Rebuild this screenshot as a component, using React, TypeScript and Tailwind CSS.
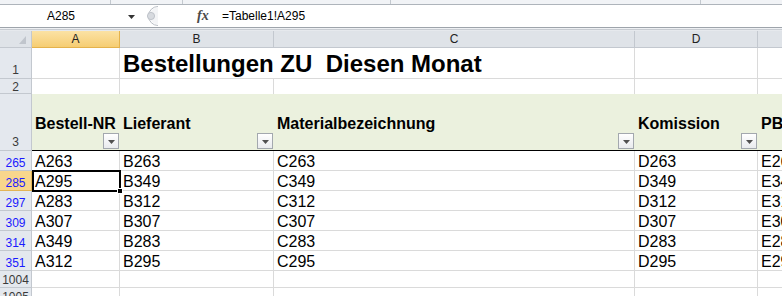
import React from "react";

const cols = "grid grid-cols-[32px_88px_154px_361px_123px_1fr]";

const rows = [
  { n: "265", a: "A263", b: "B263", c: "C263", d: "D263", e: "E263" },
  { n: "285", a: "A295", b: "B349", c: "C349", d: "D349", e: "E349", sel: true },
  { n: "297", a: "A283", b: "B312", c: "C312", d: "D312", e: "E312" },
  { n: "309", a: "A307", b: "B307", c: "C307", d: "D307", e: "E307" },
  { n: "314", a: "A349", b: "B283", c: "C283", d: "D283", e: "E283" },
  { n: "351", a: "A312", b: "B295", c: "C295", d: "D295", e: "E295" },
];

function FilterButton() {
  return (
    <div className="absolute right-[1px] bottom-[1px] w-[16px] h-[16px] border border-[#a3a8ae] bg-gradient-to-b from-white to-[#e9ebee] flex items-center justify-center">
      <svg width="7" height="4" viewBox="0 0 7 4" className="mt-[2px]">
        <path d="M0 0 L7 0 L3.5 4 Z" fill="#505050" />
      </svg>
    </div>
  );
}

function RowHead({ children, sel, blue, h, pb }: { children?: React.ReactNode; sel?: boolean; blue?: boolean; h: string; pb: string }) {
  return (
    <div
      className={`${h} ${pb} flex items-end justify-center border-r border-b text-[12px] leading-[12px] ${
        sel ? "bg-[#f8d68c] border-[#e3b455]" : "bg-[#e4e8ee] border-[#c3c8cf]"
      } ${blue ? "text-[#1a1aff]" : "text-[#3a3a3a]"}`}
    >
      {children}
    </div>
  );
}

export default function App() {
  return (
    <div className="w-[782px] h-[296px] overflow-hidden bg-white font-['Liberation_Sans',Arial,sans-serif] text-black">
      {/* ribbon remnant */}
      <div className="h-[5px] flex bg-[#f1f3f6] border-b border-[#aeb4bb]">
        <div className="w-[111px] border-r border-[#c4c9cf]" />
        <div className="w-[72px] border-r border-[#c4c9cf]" />
        <div className="w-[208px] border-r border-[#c4c9cf]" />
        <div className="w-[310px] border-r border-[#c4c9cf]" />
        <div className="flex-1" />
      </div>

      {/* formula bar */}
      <div className="h-[22px] flex items-center bg-white text-[12px] leading-[12px]">
        <div className="w-[141px] h-full relative flex items-center">
          <span className="ml-[47px]">A285</span>
          <svg width="7" height="4" viewBox="0 0 7 4" className="absolute left-[128px] top-[10px]">
            <path d="M0 0 L7 0 L3.5 4 Z" fill="#333" />
          </svg>
        </div>
        <svg width="18" height="20" viewBox="0 0 18 20" className="shrink-0">
          <path d="M17 0.5 A9.5 9.5 0 0 0 17 19.5" fill="none" stroke="#b8bdc4" />
          <path d="M17 1.5 A8.5 8.5 0 0 0 17 18.5 Z" fill="#f3f4f6" />
          <circle cx="10" cy="10" r="3.6" fill="#d7dadf" stroke="#b5bac1" strokeWidth="0.8" />
        </svg>
        <div className="w-[38px]" />
        <span className="font-['Liberation_Serif',serif] italic font-bold text-[14px] text-[#4a4a4a] w-[12px]">
          fx
        </span>
        <div className="w-[13px]" />
        <span>=Tabelle1!A295</span>
      </div>
      <div className="h-[1px] bg-[#9ea4ab]" />
      <div className="h-[1px] bg-[#eef0f3]" />
      <div className="h-[1px] bg-[#c8ccd2]" />
      <div className="h-[1px] bg-[#e6e9ed]" />

      {/* column headers */}
      <div className={`${cols} h-[17px] text-[12px] leading-[12px] text-[#222]`}>
        <div className="border-r border-b border-[#c3c8cf] bg-[#dfe3e8] flex items-end justify-end pr-[5px] pb-[3px]">
          <svg width="7" height="8" viewBox="0 0 7 8">
            <path d="M7 0 L7 8 L0 8 Z" fill="#c0c5cc" />
          </svg>
        </div>
        <div className="border-r border-b border-[#e4b24c] bg-gradient-to-b from-[#fbe2a4] to-[#f6cd72] flex items-center justify-center">A</div>
        <div className="border-r border-b border-[#c3c8cf] bg-[#dfe3e8] flex items-center justify-center">B</div>
        <div className="border-r border-b border-[#c3c8cf] bg-[#dfe3e8] flex items-center justify-center">C</div>
        <div className="border-r border-b border-[#c3c8cf] bg-[#dfe3e8] flex items-center justify-center">D</div>
        <div className="border-b border-[#c3c8cf] bg-[#dfe3e8]" />
      </div>

      {/* row 1: title */}
      <div className={`${cols} h-[31px]`}>
        <RowHead h="h-[31px]" pb="pb-[2px]">1</RowHead>
        <div className="border-r border-b border-[#dadada]" />
        <div className="col-span-2 border-r border-b border-[#dadada] pl-[3px] pt-[4px] text-[24px] leading-[24px] font-bold whitespace-pre">
          Bestellungen ZU  Diesen Monat
        </div>
        <div className="border-r border-b border-[#dadada]" />
        <div className="border-b border-[#dadada]" />
      </div>

      {/* row 2 */}
      <div className={`${cols} h-[15px]`}>
        <RowHead h="h-[15px]" pb="pb-0">2</RowHead>
        <div className="border-r border-[#dadada]" />
        <div className="border-r border-[#dadada]" />
        <div className="border-r border-[#dadada]" />
        <div className="border-r border-[#dadada]" />
        <div />
      </div>

      {/* row 3: table header */}
      <div className={`${cols} h-[57px]`}>
        <RowHead h="h-[57px]" pb="pb-[2px]">3</RowHead>
        {["Bestell-NR", "Lieferant", "Materialbezeichnung", "Komission", "PB"].map((t, i) => (
          <div
            key={t}
            className="relative bg-[#ebf1de] border-b border-black pl-[3px] pt-[22px] text-[16px] leading-[16px] font-bold whitespace-nowrap overflow-hidden"
          >
            {t}
            {i < 4 && <FilterButton />}
          </div>
        ))}
      </div>

      {/* data rows */}
      {rows.map((r) => (
        <div key={r.n} className={`${cols} h-[20px] text-[16px] leading-[16px]`}>
          <RowHead h="h-[20px]" pb="pb-[1px]" sel={r.sel} blue>
            {r.n}
          </RowHead>
          <div className="relative border-r border-b border-[#dadada] pl-[3px] flex items-end">
            {r.a}
            {r.sel && (
              <>
                <div className="absolute left-0 top-[-1px] right-[-2px] bottom-[-2px] border-2 border-black z-10" />
                <div className="absolute right-[-4px] bottom-[-4px] w-[6px] h-[6px] bg-black border border-white z-20" />
              </>
            )}
          </div>
          <div className="border-r border-b border-[#dadada] pl-[3px] flex items-end">{r.b}</div>
          <div className="border-r border-b border-[#dadada] pl-[3px] flex items-end">{r.c}</div>
          <div className="border-r border-b border-[#dadada] pl-[3px] flex items-end">{r.d}</div>
          <div className="border-b border-[#dadada] pl-[3px] flex items-end whitespace-nowrap overflow-hidden">{r.e}</div>
        </div>
      ))}

      {/* empty rows */}
      {["1004", "1005"].map((n) => (
        <div key={n} className={`${cols} h-[17px]`}>
          <RowHead h="h-[17px]" pb="pb-[1px]">{n}</RowHead>
          <div className="border-r border-b border-[#dadada]" />
          <div className="border-r border-b border-[#dadada]" />
          <div className="border-r border-b border-[#dadada]" />
          <div className="border-r border-b border-[#dadada]" />
          <div className="border-b border-[#dadada]" />
        </div>
      ))}
    </div>
  );
}
